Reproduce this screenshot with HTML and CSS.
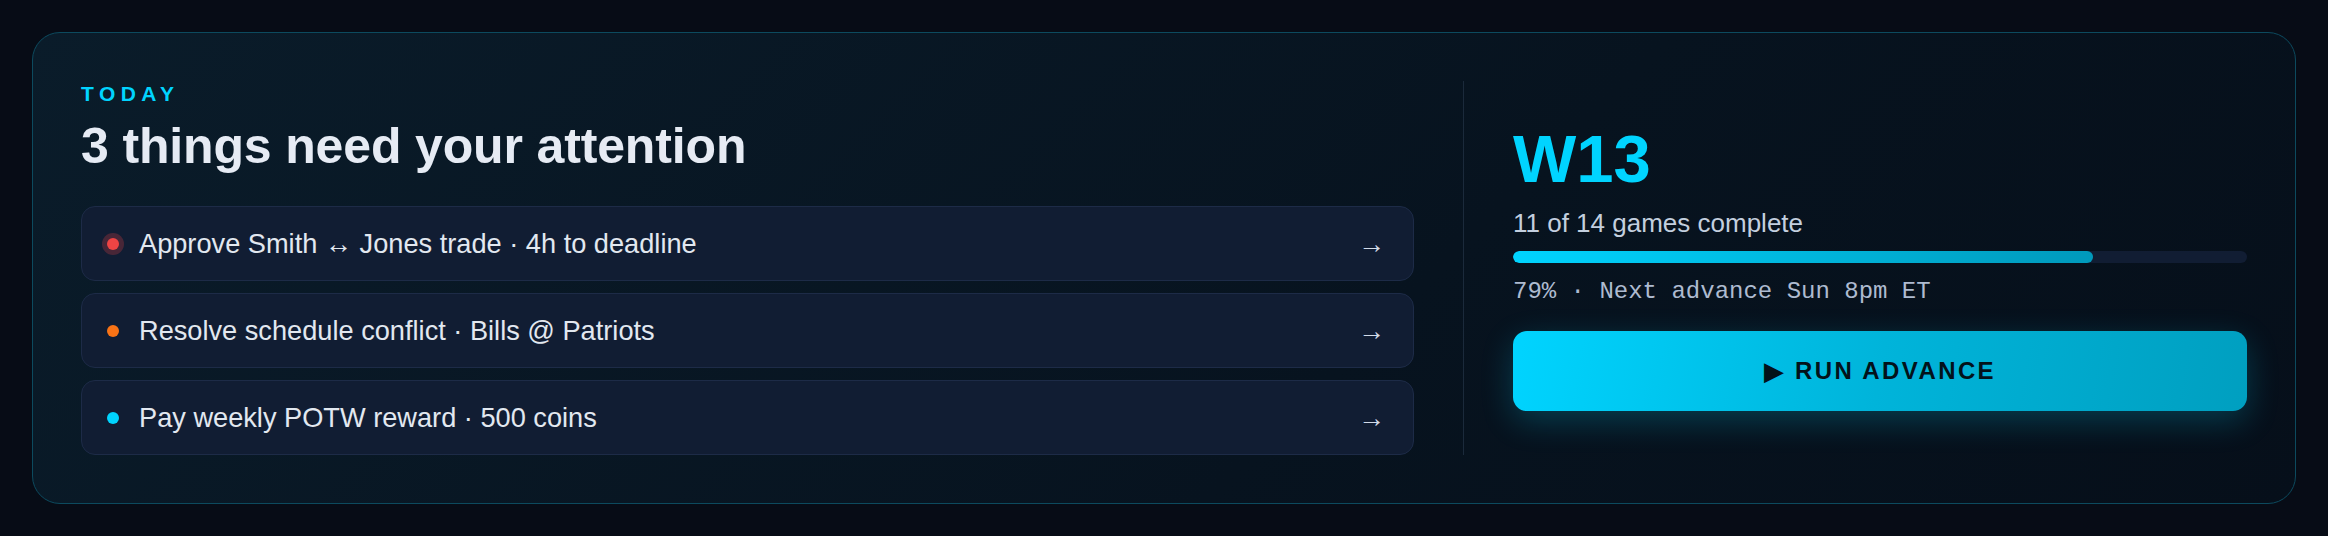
FILE: index.html
```html
<!DOCTYPE html>
<html lang="en">
  <head>
    <meta charset="UTF-8" />
    <meta name="viewport" content="width=device-width, initial-scale=1.0" />
    <title>Commissioner Today</title>
    <link rel="stylesheet" href="styles.css">
  </head>
  <body>
    <!-- Today panel -->
    <section class="today-card">
      <div class="today-main">
        <div class="eyebrow">TODAY</div>
        <h1 class="today-title">3 things need your attention</h1>

        <div class="task-list">
          <a href="#" class="task-item">
            <span class="task-dot dot-red"></span>
            <span class="task-text">Approve Smith ↔ Jones trade · 4h to deadline</span>
            <span class="task-arrow">→</span>
          </a>
          <a href="#" class="task-item">
            <span class="task-dot dot-orange"></span>
            <span class="task-text">Resolve schedule conflict · Bills @ Patriots</span>
            <span class="task-arrow">→</span>
          </a>
          <a href="#" class="task-item">
            <span class="task-dot dot-cyan"></span>
            <span class="task-text">Pay weekly POTW reward · 500 coins</span>
            <span class="task-arrow">→</span>
          </a>
        </div>
      </div>

      <div class="divider"></div>

      <!-- Week progress -->
      <div class="week-panel">
        <div class="week-label">W13</div>
        <div class="week-sub">11 of 14 games complete</div>
        <div class="progress">
          <div class="progress-fill" style="width: 79%"></div>
        </div>
        <div class="week-meta">79% · Next advance Sun 8pm ET</div>
        <button class="advance-btn"><span class="play">▶</span>RUN ADVANCE</button>
      </div>
    </section>
  </body>
</html>
```

FILE: styles.css
```css
* {
  margin: 0;
  padding: 0;
  box-sizing: border-box;
  font-family: "Liberation Sans", Arial, sans-serif;
}

body {
  min-height: 100vh;
  padding: 32px;
  background-color: #070c16;
}

/* Card */
.today-card {
  display: grid;
  grid-template-columns: 1fr 1px 734px;
  column-gap: 49px;
  padding: 48px;
  border: 1px solid #0c4a5e;
  border-radius: 28px;
  background: linear-gradient(135deg, #0a1c2a 0%, #07131f 60%, #060f1a 100%);
}

.eyebrow {
  color: #00d4ff;
  font-size: 21px;
  font-weight: 700;
  letter-spacing: 0.26em;
  line-height: 25px;
}

.today-title {
  margin-top: 10px;
  color: #e6ebf4;
  font-size: 50px;
  font-weight: 700;
  letter-spacing: -0.15px;
  line-height: 60px;
}

/* Task rows */
.task-list {
  display: flex;
  flex-direction: column;
  gap: 12px;
  margin-top: 30px;
}

.task-item {
  display: flex;
  align-items: center;
  gap: 20px;
  height: 75px;
  padding: 0 28px 0 25px;
  border: 1px solid #1d2b47;
  border-radius: 14px;
  background-color: #111d33;
  color: #e2e8f0;
  text-decoration: none;
}

.task-dot {
  flex: none;
  width: 12px;
  height: 12px;
  border-radius: 50%;
}

.dot-red {
  background-color: #ef4444;
  box-shadow: 0 0 0 5px rgba(239, 68, 68, 0.25);
}

.dot-orange {
  background-color: #f97316;
}

.dot-cyan {
  background-color: #00d4ff;
}

.task-text {
  flex: 1;
  font-size: 27.2px;
}

.task-arrow {
  color: #d2dbe8;
  font-size: 27px;
  padding-top: 2px;
}

.divider {
  background-color: #1b2a3b;
}

/* Week panel */
.week-panel {
  display: flex;
  flex-direction: column;
  justify-content: center;
}

.week-label {
  color: #00d4ff;
  font-size: 67px;
  font-weight: 700;
  line-height: 67px;
}

.week-sub {
  margin-top: 14px;
  color: #c3cfdf;
  font-size: 26px;
  line-height: 34px;
}

.progress {
  height: 12px;
  margin-top: 11px;
  border-radius: 6px;
  background-color: #111d33;
  overflow: hidden;
}

.progress-fill {
  height: 100%;
  border-radius: 6px;
  background: linear-gradient(90deg, #00d4ff, #0099bb);
}

.week-meta {
  margin-top: 13px;
  color: #aebbd0;
  font-family: "Liberation Mono", monospace;
  font-size: 24px;
  line-height: 31px;
}

.advance-btn {
  display: flex;
  align-items: center;
  justify-content: center;
  gap: 11px;
  height: 80px;
  margin-top: 24px;
  border: none;
  border-radius: 14px;
  background: linear-gradient(100deg, #00d4ff 0%, #00b4da 50%, #009fc0 100%);
  box-shadow: 0 10px 32px rgba(0, 212, 255, 0.22);
  color: #03121a;
  font-size: 24px;
  font-weight: 700;
  letter-spacing: 0.1em;
  cursor: pointer;
}

.play {
  font-family: "DejaVu Sans", sans-serif;
  font-size: 26px;
  letter-spacing: 0;
}
```
